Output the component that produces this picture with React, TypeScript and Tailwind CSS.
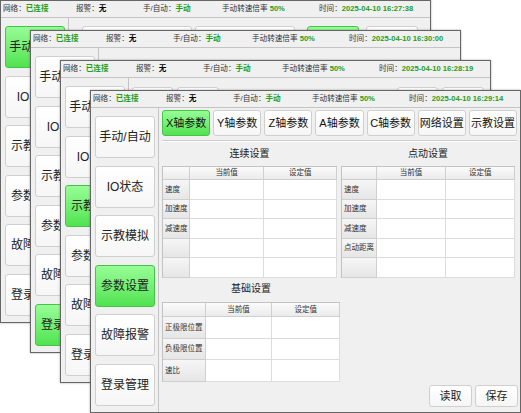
import type { ReactNode } from "react";

const SIDE = ["手动/自动", "IO状态", "示教模拟", "参数设置", "故障报警", "登录管理"];
const TABS = ["X轴参数", "Y轴参数", "Z轴参数", "A轴参数", "C轴参数", "网络设置", "示教设置"];

const GREEN_BTN =
  "bg-gradient-to-b from-[#96fd96] to-[#4fe34f] border-[#47c447]";
const WHITE_BTN =
  "bg-gradient-to-b from-[#ffffff] to-[#f6f6f6] border-[#cfcfcf]";

function StatusBar({ time }: { time: string }) {
  return (
    <div className="h-[17px] shrink-0 flex items-center pl-[2px] border-b border-[#c4c4c4] text-[7.6px] text-[#333] leading-none whitespace-nowrap">
      <div className="w-[73px] shrink-0">
        网络：<span className="font-bold text-[#1f9e1f]">已连接</span>
      </div>
      <div className="w-[67px] shrink-0">
        报警：<span className="font-bold text-black">无</span>
      </div>
      <div className="w-[79px] shrink-0">
        手/自动：<span className="font-bold text-[#1f9e1f]">手动</span>
      </div>
      <div className="w-[97px] shrink-0">
        手动转速倍率 <span className="font-bold text-[#1f9e1f]">50%</span>
      </div>
      <div className="shrink-0">
        时间：<span className="font-bold text-[#1f9e1f]">{time}</span>
      </div>
    </div>
  );
}

function SideNav({ active }: { active: number }) {
  return (
    <div className="w-[68px] shrink-0 border-r border-[#c4c4c4] pl-[4px] pt-[8px] flex flex-col gap-[7.5px]">
      {SIDE.map((s, i) => (
        <div
          key={s}
          className={`w-[60px] h-[42px] shrink-0 rounded-[3px] border flex items-center justify-center text-[12px] text-[#222] ${
            i === active ? GREEN_BTN : WHITE_BTN
          }`}
        >
          {s}
        </div>
      ))}
    </div>
  );
}

function Table({
  cols,
  headH,
  rowH,
  rows,
}: {
  cols: [string, string, string];
  headH: string;
  rowH: string;
  rows: string[];
}) {
  return (
    <div className="border-l border-t border-[#c2c2c2] bg-white">
      <div className={`flex ${headH}`}>
        {cols.map((w, i) => (
          <div
            key={i}
            className={`${w} border-r border-b border-[#cfcfcf] bg-gradient-to-b from-[#fbfbfb] to-[#ebebeb] flex items-center justify-center text-[7.5px] text-[#333]`}
          >
            {i === 1 ? "当前值" : i === 2 ? "设定值" : ""}
          </div>
        ))}
      </div>
      {rows.map((r, ri) => (
        <div key={ri} className={`flex ${rowH}`}>
          <div
            className={`${cols[0]} border-r border-b border-[#cfcfcf] bg-gradient-to-b from-[#f6f6f6] to-[#e6e6e6] flex items-center pl-[2px] text-[7.5px] text-[#333] whitespace-nowrap`}
          >
            {r}
          </div>
          <div className={`${cols[1]} border-r border-b border-[#dcdcdc] bg-white`} />
          <div className={`${cols[2]} border-r border-b border-[#dcdcdc] bg-white`} />
        </div>
      ))}
    </div>
  );
}

function Title({ children }: { children: ReactNode }) {
  return (
    <div className="h-[24px] flex items-center justify-center text-[10px] text-[#222] pb-[2px]">
      {children}
    </div>
  );
}

function ParamPage() {
  return (
    <div className="flex-1 flex flex-col pl-[3px] pr-[3px] pt-[2px] pb-[5px]">
      <div className="grid grid-cols-7 gap-[3px] h-[26px]">
        {TABS.map((t, i) => (
          <div
            key={t}
            className={`rounded-[3px] border flex items-center justify-center text-[11px] text-[#111] whitespace-nowrap ${
              i === 0 ? GREEN_BTN : WHITE_BTN
            }`}
          >
            {t}
          </div>
        ))}
      </div>
      <div className="mt-[4px] h-[2px] border-t border-[#cdcdcd] border-b border-b-white" />
      <div className="flex gap-[4px]">
        <div className="w-[175px]">
          <Title>连续设置</Title>
          <Table
            cols={["w-[27px]", "w-[75px]", "w-[73px]"]}
            headH="h-[13px]"
            rowH="h-[19.6px]"
            rows={["速度", "加速度", "减速度", "", ""]}
          />
        </div>
        <div className="w-[174px]">
          <Title>点动设置</Title>
          <Table
            cols={["w-[35px]", "w-[70px]", "w-[69px]"]}
            headH="h-[13px]"
            rowH="h-[19.6px]"
            rows={["速度", "加速度", "减速度", "点动距离", ""]}
          />
        </div>
      </div>
      <div className="w-[178px]">
        <Title>基础设置</Title>
        <Table
          cols={["w-[43px]", "w-[67px]", "w-[68px]"]}
          headH="h-[14px]"
          rowH="h-[21.6px]"
          rows={["正极限位置", "负极限位置", "速比"]}
        />
      </div>
      <div className="flex-1 flex items-end justify-end gap-[3px] -mr-[1px]">
        {["读取", "保存"].map((b) => (
          <div
            key={b}
            className={`w-[43px] h-[22px] rounded-[3px] border flex items-center justify-center text-[11px] text-[#222] ${WHITE_BTN}`}
          >
            {b}
          </div>
        ))}
      </div>
    </div>
  );
}

function Box({ className, green }: { className: string; green?: boolean }) {
  return (
    <div
      className={`h-[40px] shrink-0 rounded-[3px] border ${green ? GREEN_BTN : WHITE_BTN} ${className}`}
    />
  );
}

function Window({
  className,
  time,
  active,
  children,
}: {
  className: string;
  time: string;
  active: number;
  children?: ReactNode;
}) {
  return (
    <div
      className={`absolute w-[431px] h-[323px] border border-[#666] bg-[#f0f0f0] shadow-[0_0_2px_rgba(0,0,0,0.35)] flex flex-col overflow-hidden ${className}`}
    >
      <StatusBar time={time} />
      <div className="flex-1 flex min-h-0">
        <SideNav active={active} />
        {children ?? <div className="flex-1" />}
      </div>
    </div>
  );
}

export default function App() {
  return (
    <div className="relative w-[521px] h-[413px] bg-white overflow-hidden font-['Liberation_Sans','Noto_Sans_CJK_SC',sans-serif]">
      <Window className="left-0 top-0" time="2025-04-10 16:27:38" active={0}>
        <div className="flex-1 flex pt-[8px]">
          <Box className="ml-[13px] w-[110px]" />
          <Box className="ml-[3px] w-[100px]" />
          <Box className="ml-[12px] w-[52px]" green />
          <Box className="ml-[7px] w-[52px]" />
        </div>
      </Window>
      <Window className="left-[30px] top-[30px]" time="2025-04-10 16:30:00" active={5} />
      <Window className="left-[60px] top-[60px]" time="2025-04-10 16:28:19" active={2}>
        <div className="flex-1 flex pt-[9px]">
          <Box className="ml-[3px] w-[41px]" />
          <Box className="ml-[4px] w-[42px]" />
          <Box className="ml-[178px] w-[41px]" />
          <Box className="ml-[4px] w-[42px]" />
        </div>
      </Window>
      <Window className="left-[90px] top-[90px]" time="2025-04-10 16:29:14" active={3}>
        <ParamPage />
      </Window>
    </div>
  );
}
